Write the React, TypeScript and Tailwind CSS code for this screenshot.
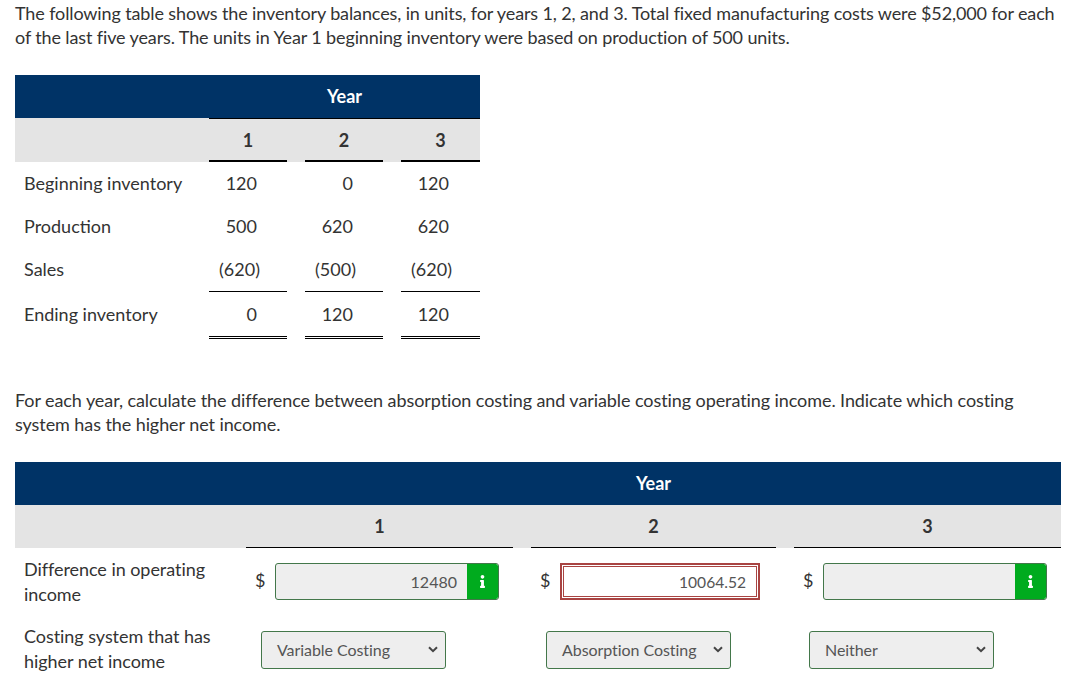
import React from "react";
import { FaInfo } from "react-icons/fa";

type Rule = "single" | "double" | undefined;

const heights: Record<string, string> = {
  none: "h-[43px]",
  single: "h-[44px]",
  double: "h-[47px]",
};

const Num = ({ v, rule, last }: { v: string; rule?: Rule; last?: boolean }) => (
  <div
    className={`${heights[rule ?? "none"]} flex items-center justify-end pb-[1px] ${last ? "pr-[31px]" : "pr-[30px]"} ${
      rule === "single" ? "border-b border-black" : rule === "double" ? "border-b-[3px] border-double border-black" : ""
    }`}
  >
    <span className={v.startsWith("(") ? "-mr-[3px]" : ""}>{v}</span>
  </div>
);

const rows: { label: string; vals: string[]; rule?: Rule }[] = [
  { label: "Beginning inventory", vals: ["120", "0", "120"] },
  { label: "Production", vals: ["500", "620", "620"] },
  { label: "Sales", vals: ["(620)", "(500)", "(620)"], rule: "single" },
  { label: "Ending inventory", vals: ["0", "120", "120"], rule: "double" },
];

const Info = () => (
  <div className="w-[31px] bg-[#00ab1e] rounded-r-[2px] flex items-center justify-center text-white">
    <FaInfo size={13} />
  </div>
);

const Amount = ({ value, state, w }: { value: string; state: "ok" | "bad"; w: string }) => (
  <div className="flex items-center h-[37px]">
    <span className="w-[29px] pl-[9px] -mt-[3px]">$</span>
    {state === "ok" ? (
      <div className={`${w} h-[37px] flex border border-[#43774a] rounded-[3px] bg-[#eeeeee] overflow-hidden`}>
        <div className="flex-1 flex items-center justify-end pr-[10px] text-[16px] text-[#555] pt-[1px]">{value}</div>
        <Info />
      </div>
    ) : (
      <div className={`${w} h-[37px] border-2 border-[#a94442] shadow-[inset_0_0_0_1px_#ffffff,inset_0_0_0_2px_#a94442] bg-white flex items-center justify-end pr-[12px] text-[15.6px] text-[#555] pt-[1px]`}>
        {value}
      </div>
    )}
  </div>
);

const Sel = ({ value }: { value: string }) => (
  <div className="ml-[15px] w-[184.5px] h-[38px] flex items-center justify-between border border-[#43774a] rounded-[3px] bg-[#eeeeee] pl-[15px] pr-[7px] text-[16px] text-[#555] tracking-[-0.06px]">
    <span>{value}</span>
    <svg width="10" height="7" viewBox="0 0 10 7" className="mt-[-1px]">
      <path d="M1 1.2 L5 5.2 L9 1.2" fill="none" stroke="#444" strokeWidth="2" />
    </svg>
  </div>
);

export default function App() {
  return (
    <div className="w-[1081px] h-[698px] bg-white overflow-hidden font-['Lato',sans-serif] text-[18px] leading-[24px] text-[#333] pl-[15px] pr-[20px] pt-[1px]">
      <p className="tracking-[-0.12px]">
        The following table shows the inventory balances, in units, for years 1, 2, and 3. Total fixed manufacturing costs were $52,000 for each of the last five years. The units in Year 1 beginning inventory were based on production of 500 units.
      </p>

      <div className="mt-[26px] w-[465px] grid grid-cols-[194px_78px_18px_78px_18px_79px]">
        <div className="col-span-6 h-[43px] bg-[#003366] flex items-center justify-center pl-[194px] pb-[1px] font-bold text-white">
          Year
        </div>
        <div className="col-span-6 h-[44px] bg-[#e4e4e4] grid grid-cols-[194px_78px_18px_78px_18px_79px] font-bold">
          <div />
          {["1", "", "2", "", "3"].map((h, i) =>
            h ? (
              <div key={i} className="border-y border-t-black border-b-2 border-b-black flex items-center justify-center">{h}</div>
            ) : (
              <div key={i} className="border-t border-black" />
            )
          )}
        </div>
        {rows.map((r) => (
          <React.Fragment key={r.label}>
            <div className={`${heights[r.rule ?? "none"]} flex items-center pl-[9px] ${r.rule === "double" ? "pb-[4px]" : "pb-[2px]"}`}>{r.label}</div>
            <Num v={r.vals[0]} rule={r.rule} />
            <div />
            <Num v={r.vals[1]} rule={r.rule} />
            <div />
            <Num v={r.vals[2]} rule={r.rule} last />
          </React.Fragment>
        ))}
      </div>

      <p className="mt-[49px] tracking-[-0.08px]">
        For each year, calculate the difference between absorption costing and variable costing operating income. Indicate which costing system has the higher net income.
      </p>

      <div className="mt-[26px] w-[1046px] grid grid-cols-[231px_267px_18px_245px_18px_267px]">
        <div className="col-span-6 h-[43px] bg-[#003366] flex items-center justify-center font-bold text-white pl-[231px] pb-[1px]">
          Year
        </div>
        <div className="col-span-6 h-[43px] bg-[#e4e4e4] grid grid-cols-[231px_267px_18px_245px_18px_267px] font-bold">
          <div />
          {["1", "", "2", "", "3"].map((h, i) =>
            h ? (
              <div key={i} className="border-b border-black flex items-center justify-center">{h}</div>
            ) : (
              <div key={i} />
            )
          )}
        </div>

        <div className="h-[67px] pl-[9px] pt-[9px] leading-[25px] tracking-[-0.05px]">Difference in operating income</div>
        <div className="pt-[15px]"><Amount value="12480" state="ok" w="w-[224px]" /></div>
        <div />
        <div className="pt-[15px]"><Amount value="10064.52" state="bad" w="w-[200px]" /></div>
        <div />
        <div className="pt-[15px]"><Amount value="" state="ok" w="w-[224px]" /></div>

        <div className="h-[67px] pl-[9px] pt-[9px] leading-[25px] tracking-[-0.05px]">Costing system that has higher net income</div>
        <div className="pt-[16px]"><Sel value="Variable Costing" /></div>
        <div />
        <div className="pt-[16px]"><Sel value="Absorption Costing" /></div>
        <div />
        <div className="pt-[16px]"><Sel value="Neither" /></div>
      </div>
    </div>
  );
}
